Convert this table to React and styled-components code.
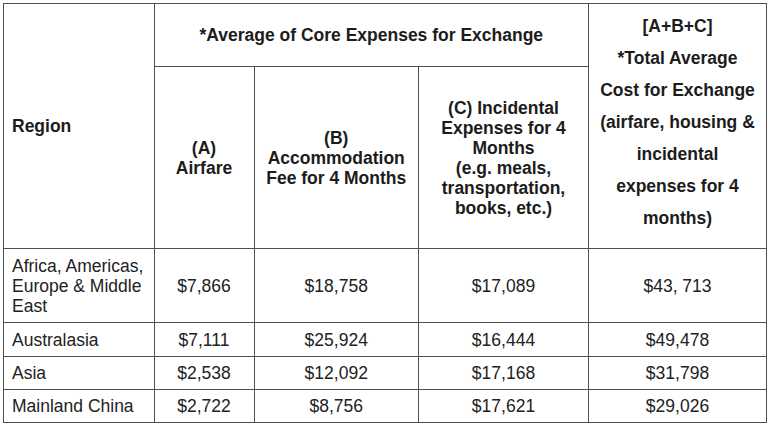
import React from 'react';
import styled, { createGlobalStyle } from 'styled-components';

const GlobalStyle = createGlobalStyle`
  html, body {
    margin: 0;
    padding: 0;
    background: #ffffff;
  }
`;

const Page = styled.div`
  padding: 3px 0 0 3px;
  font-family: "Liberation Sans", Arial, sans-serif;
  font-size: 17.5px;
  color: #222222;
`;

const Table = styled.table`
  width: 763px;
  table-layout: fixed;
  border-collapse: collapse;
  border: 1.5px solid #5a5a5a;
`;

const Row = styled.tr`
  height: ${(p) => p.$h}px;
`;

const HeadCell = styled.th`
  border: 1px solid #4f4f4f;
  padding: 0 8px ${(p) => p.$pb || 0}px;
  font-weight: bold;
  color: #1c1c1c;
  text-align: ${(p) => p.$align || 'center'};
  vertical-align: middle;
  line-height: ${(p) => p.$lh || 20}px;
  white-space: nowrap;
`;

const Cell = styled.td`
  border: 1px solid #4f4f4f;
  padding: 0 8px;
  text-align: ${(p) => p.$align || 'center'};
  vertical-align: middle;
  line-height: 20px;
  white-space: nowrap;
`;

const Lines = ({ items }) =>
  items.map((t, i) => (
    <React.Fragment key={i}>
      {i > 0 && <br />}
      {t}
    </React.Fragment>
  ));

const rows = [
  { h: 74, region: ['Africa, Americas,', 'Europe & Middle', 'East'], a: '$7,866', b: '$18,758', c: '$17,089', total: '$43, 713' },
  { h: 34, region: ['Australasia'], a: '$7,111', b: '$25,924', c: '$16,444', total: '$49,478' },
  { h: 33, region: ['Asia'], a: '$2,538', b: '$12,092', c: '$17,168', total: '$31,798' },
  { h: 33, region: ['Mainland China'], a: '$2,722', b: '$8,756', c: '$17,621', total: '$29,026' },
];

export default function App() {
  return (
    <>
      <GlobalStyle />
      <Page>
        <Table>
          <colgroup>
            <col style={{ width: 150.5 }} />
            <col style={{ width: 100 }} />
            <col style={{ width: 164.5 }} />
            <col style={{ width: 170 }} />
            <col style={{ width: 178 }} />
          </colgroup>
          <thead>
            <Row $h={63}>
              <HeadCell rowSpan={2} $align="left">Region</HeadCell>
              <HeadCell colSpan={3}>*Average of Core Expenses for Exchange</HeadCell>
              <HeadCell rowSpan={2} $lh={32} $pb={9}>
                <Lines
                  items={[
                    '[A+B+C]',
                    '*Total Average',
                    'Cost for Exchange',
                    '(airfare, housing &',
                    'incidental',
                    'expenses for 4',
                    'months)',
                  ]}
                />
              </HeadCell>
            </Row>
            <Row $h={182}>
              <HeadCell>
                <Lines items={['(A)', 'Airfare']} />
              </HeadCell>
              <HeadCell>
                <Lines items={['(B)', 'Accommodation', 'Fee for 4 Months']} />
              </HeadCell>
              <HeadCell>
                <Lines
                  items={[
                    '(C) Incidental',
                    'Expenses for 4',
                    'Months',
                    '(e.g. meals,',
                    'transportation,',
                    'books, etc.)',
                  ]}
                />
              </HeadCell>
            </Row>
          </thead>
          <tbody>
            {rows.map((r) => (
              <Row key={r.region[0]} $h={r.h}>
                <Cell $align="left">
                  <Lines items={r.region} />
                </Cell>
                <Cell>{r.a}</Cell>
                <Cell>{r.b}</Cell>
                <Cell>{r.c}</Cell>
                <Cell>{r.total}</Cell>
              </Row>
            ))}
          </tbody>
        </Table>
      </Page>
    </>
  );
}
